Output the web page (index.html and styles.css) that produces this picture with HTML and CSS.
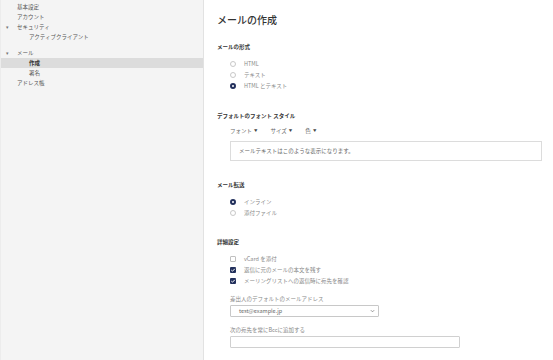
FILE: index.html
```html
<!DOCTYPE html>
<html lang="ja">
<head>
    <meta charset="UTF-8">
    <title>メールの作成</title>
    <link rel="stylesheet" href="styles.css">
</head>
<body>
    <div class="sidebar">
        <div class="nav-group">
            <div class="nav-item">基本設定</div>
            <div class="nav-item">アカウント</div>
            <div class="nav-item"><span class="caret">▾</span>セキュリティ</div>
            <div class="nav-item sub">アクティブクライアント</div>
        </div>
        <div class="nav-group">
            <div class="nav-item"><span class="caret">▾</span>メール</div>
            <div class="nav-item sub active">作成</div>
            <div class="nav-item sub">署名</div>
            <div class="nav-item">アドレス帳</div>
        </div>
    </div>

    <div class="main">
        <h1>メールの作成</h1>

        <div class="section">
            <h2>メールの形式</h2>
            <div class="options">
                <div class="option"><span class="radio"></span>HTML</div>
                <div class="option"><span class="radio"></span>テキスト</div>
                <div class="option"><span class="radio checked"></span>HTML とテキスト</div>
            </div>
        </div>

        <div class="section">
            <h2>デフォルトのフォント スタイル</h2>
            <div class="font-toolbar">
                <span class="tool">フォント<span class="tri">▼</span></span>
                <span class="tool">サイズ<span class="tri">▼</span></span>
                <span class="tool">色<span class="tri">▼</span></span>
            </div>
            <div class="preview">メールテキストはこのような表示になります。</div>
        </div>

        <div class="section">
            <h2>メール転送</h2>
            <div class="options">
                <div class="option"><span class="radio checked"></span>インライン</div>
                <div class="option"><span class="radio"></span>添付ファイル</div>
            </div>
        </div>

        <div class="section">
            <h2>詳細設定</h2>
            <div class="options">
                <div class="option"><span class="check"></span>vCard を添付</div>
                <div class="option"><span class="check checked"><svg viewBox="0 0 6 6"><path d="M1.3 3.1 2.5 4.2 4.8 1.8" fill="none" stroke="#fff" stroke-width="1"/></svg></span>返信に元のメールの本文を残す</div>
                <div class="option"><span class="check checked"><svg viewBox="0 0 6 6"><path d="M1.3 3.1 2.5 4.2 4.8 1.8" fill="none" stroke="#fff" stroke-width="1"/></svg></span>メーリングリストへの返信時に宛先を確認</div>
            </div>
            <div class="field">
                <label>差出人のデフォルトのメールアドレス</label>
                <div class="select">
                    <span>test@example.jp</span>
                    <svg viewBox="0 0 6 4" width="5" height="4"><path d="M1 1 3 3 5 1" fill="none" stroke="#777" stroke-width="0.9"/></svg>
                </div>
            </div>
            <div class="field">
                <label>次の宛先を常にBccに追加する</label>
                <input type="text" class="text-input">
            </div>
        </div>
    </div>
</body>
</html>
```

FILE: styles.css
```css
body {
    margin: 0;
    display: flex;
    min-height: 100vh;
    background: #fff;
    font-family: "Noto Sans CJK JP", "Noto Sans", sans-serif;
    font-size: 5.5px;
    color: #444;
}
.sidebar {
    width: 202px;
    flex-shrink: 0;
    background-color: #f4f4f4;
    border-left: 1px solid #ececec;
    border-right: 1px solid #e2e2e2;
    padding-top: 2px;
}
.nav-group {
    margin-bottom: 6px;
}
.nav-item {
    height: 10px;
    line-height: 10px;
    padding-left: 16px;
    position: relative;
    color: #555;
}
.nav-item.sub {
    padding-left: 28px;
}
.nav-item.active {
    background-color: #dcdcdc;
    font-weight: bold;
    color: #333;
}
.caret {
    position: absolute;
    left: 5px;
    color: #777;
    font-size: 5px;
}
.main {
    flex: 1;
    padding: 13px 12px 0 13px;
}
h1 {
    margin: 0 0 15px 0;
    font-size: 10px;
    line-height: 14px;
    font-weight: 500;
    color: #333;
}
h2 {
    margin: 0;
    font-size: 5.5px;
    line-height: 10px;
    font-weight: bold;
    color: #333;
}
.section {
    margin-bottom: 19px;
}
.options {
    margin-top: 6.5px;
    padding-left: 13px;
}
.option {
    display: flex;
    align-items: center;
    height: 11px;
    color: #888;
}
.radio {
    width: 6px;
    height: 6px;
    box-sizing: border-box;
    border: 1px solid #c8c8c8;
    border-radius: 50%;
    margin-right: 8px;
}
.radio.checked {
    border: 2px solid #22305c;
    background: #fff;
}
.check {
    width: 6px;
    height: 6px;
    box-sizing: border-box;
    border: 1px solid #c0c0c0;
    border-radius: 1px;
    margin-right: 8px;
    display: flex;
}
.check.checked {
    border: none;
    background-color: #22305c;
}
.check svg {
    width: 6px;
    height: 6px;
}
.font-toolbar {
    margin-top: 5px;
    padding-left: 13px;
    height: 10px;
    line-height: 10px;
    display: flex;
    gap: 13px;
    color: #666;
}
.tri {
    font-size: 3.5px;
    margin-left: 2px;
    color: #444;
    vertical-align: 1px;
}
.preview {
    margin: 5px 0 0 13px;
    width: 312px;
    height: 20px;
    box-sizing: border-box;
    border: 1px solid #dcdcdc;
    padding-left: 8px;
    line-height: 18px;
    color: #666;
}
.field {
    padding-left: 13px;
    margin-top: 7.5px;
}
.field label {
    display: block;
    line-height: 10px;
    color: #888;
}
.select {
    margin-top: 1px;
    width: 149px;
    height: 12px;
    box-sizing: border-box;
    border: 1px solid #c8c8c8;
    border-radius: 1px;
    display: flex;
    align-items: center;
    justify-content: space-between;
    padding: 0 3px 0 8px;
    color: #666;
}
.text-input {
    display: block;
    margin-top: 1px;
    width: 230px;
    height: 12px;
    box-sizing: border-box;
    border: 1px solid #d0d0d0;
    border-radius: 1px;
    padding: 0;
    outline: none;
}
```
